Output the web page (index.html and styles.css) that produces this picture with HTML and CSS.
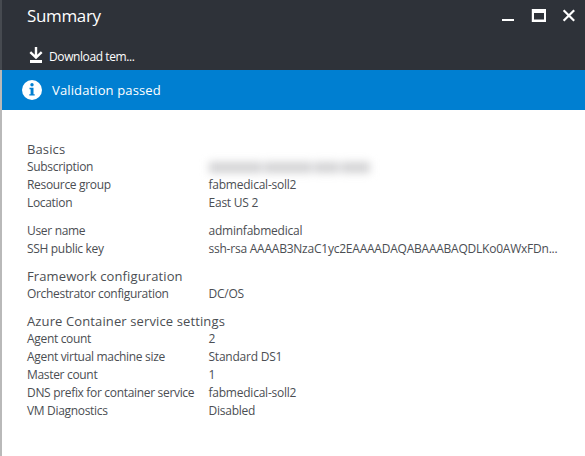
FILE: index.html
```html
<!DOCTYPE html>
<html lang="en">
<head>
<meta charset="utf-8">
<title>Summary</title>
<link rel="stylesheet" href="styles.css">
</head>
<body>
<div class="blade">
  <header class="header">
    <div class="titlebar">
      <h1>Summary</h1>
      <div class="controls">
        <svg width="14" height="14" viewBox="0 0 14 14"><path d="M1 11h12v2H1z" fill="#fff"/></svg>
        <svg width="15" height="14" viewBox="0 0 15 14"><path d="M.8 1H15v13H.8zM3 5v6.5h10V5z" fill="#fff" fill-rule="evenodd"/></svg>
        <svg width="14" height="14" viewBox="0 0 14 14"><path d="M1.6 2.2l10.6 10.6M12.2 2.2L1.6 12.8" stroke="#fff" stroke-width="2.2"/></svg>
      </div>
    </div>
    <div class="toolbar">
      <svg width="14" height="17" viewBox="0 0 14 17"><path d="M7 0v10M1.3 5.2L7 10.6l5.7-5.4" fill="none" stroke="#fff" stroke-width="2.4"/><path d="M1 13h12v3H1z" fill="#fff"/></svg>
      <span class="command">Download tem...</span>
    </div>
  </header>
  <div class="banner">
    <svg width="20" height="20" viewBox="0 0 20 20"><circle cx="10" cy="10" r="10" fill="#fff"/><circle cx="10" cy="4.8" r="1.7" fill="#007fd1"/><path d="M7.5 7.8h4v6.4h1.2v1.4H7.3v-1.4h1.3V9.2H7.5z" fill="#007fd1"/></svg>
    <span class="message">Validation passed</span>
  </div>
  <main class="content">
    <section>
      <h2>Basics</h2>
      <dl>
        <dt>Subscription</dt><dd class="redacted"><i class="w1"></i><i class="w2"></i><i class="w3"></i><i class="w4"></i></dd>
        <dt>Resource group</dt><dd>fabmedical-soll2</dd>
        <dt>Location</dt><dd>East US 2</dd>
      </dl>
      <dl class="credentials">
        <dt>User name</dt><dd>adminfabmedical</dd>
        <dt>SSH public key</dt><dd>ssh-rsa AAAAB3NzaC1yc2EAAAADAQABAAABAQDLKo0AWxFDn...</dd>
      </dl>
    </section>
    <section>
      <h2>Framework configuration</h2>
      <dl>
        <dt>Orchestrator configuration</dt><dd>DC/OS</dd>
      </dl>
    </section>
    <section>
      <h2>Azure Container service settings</h2>
      <dl>
        <dt>Agent count</dt><dd>2</dd>
        <dt>Agent virtual machine size</dt><dd>Standard DS1</dd>
        <dt>Master count</dt><dd>1</dd>
        <dt>DNS prefix for container service</dt><dd>fabmedical-soll2</dd>
        <dt>VM Diagnostics</dt><dd>Disabled</dd>
      </dl>
    </section>
  </main>
</div>
</body>
</html>
```
FILE: styles.css
```css
* { box-sizing: border-box; }
body {
  margin: 0;
  height: 456px;
  overflow: hidden;
  background: #b9b9b9;
  font-family: "Open Sans", "Noto Sans", sans-serif;
  font-size: 12px;
  line-height: 18px;
  color: #4b4e53;
}
.blade { margin-left: 2px; height: 456px; background: #fff; }
.header { height: 70px; margin-left: -2px; background: #2e3239; border-left: 2px solid #464a50; color: #fff; }
.titlebar { display: flex; justify-content: space-between; height: 41px; padding: 5px 9px 0 25px; }
h1 { margin: 0; font-size: 17px; line-height: 22px; font-weight: 400; letter-spacing: -0.35px; }
.controls { display: flex; gap: 16px; padding-top: 3px; }
svg { display: block; flex: none; }
.toolbar { display: flex; gap: 6px; padding: 6px 0 0 27px; }
.command { font-size: 12px; font-weight: 500; line-height: 19px; letter-spacing: -0.4px; }
.banner { display: flex; align-items: center; gap: 10px; height: 40px; padding-left: 20px; background: #007fd1; color: #fff; }
.message { font-size: 13px; font-weight: 500; letter-spacing: 0.13px; }
.content { display: flex; flex-direction: column; gap: 9px; padding: 30px 0 0 25px; }
h2 { margin: 0; font-size: 13px; line-height: 18px; font-weight: 400; letter-spacing: 0.12px; }
dl { display: grid; grid-template-columns: 181.5px 360px; grid-auto-rows: 18px; margin: 0; white-space: nowrap; }
.credentials { margin-top: 10px; }
dt, dd { margin: 0; }
dt { letter-spacing: -0.32px; }
dd { letter-spacing: -0.23px; }
.redacted { display: flex; align-items: center; gap: 2px; filter: blur(4px); }
.redacted i { height: 11px; background: #d2d2d4; }
.w1 { width: 53px; }
.w2 { width: 48px; }
.w3 { width: 25px; }
.w4 { width: 29px; }
```
